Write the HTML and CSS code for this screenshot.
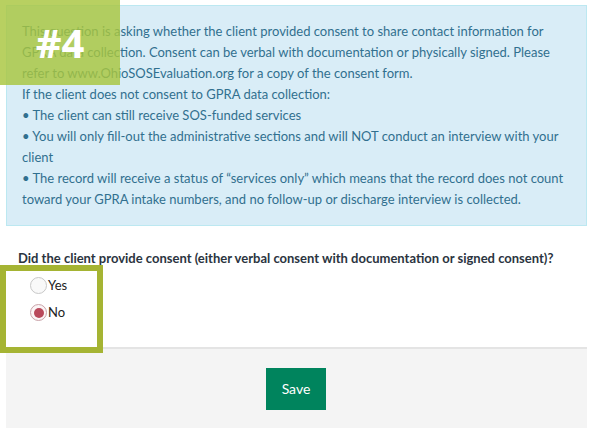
FILE: index.html
```html
<!DOCTYPE html>
<html>
<head>
<meta charset="utf-8">
<link rel="stylesheet" href="styles.css">
</head>
<body>
<div class="page">
  <div class="alert">
    <p>This question is asking whether the client provided consent to share contact information for GPRA data collection. Consent can be verbal with documentation or physically signed. Please refer to www.OhioSOSEvaluation.org for a copy of the consent form.</p>
    <p>If the client does not consent to GPRA data collection:</p>
    <p>• The client can still receive SOS-funded services</p>
    <p>• You will only fill-out the administrative sections and will NOT conduct an interview with your client</p>
    <p>• The record will receive a status of “services only” which means that the record does not count toward your GPRA intake numbers, and no follow-up or discharge interview is collected.</p>
  </div>
  <div class="question">
    <div class="label">Did the client provide consent (either verbal consent with documentation or signed consent)?</div>
    <div class="options">
      <label class="opt"><input type="radio" name="consent" class="radio">Yes</label>
      <label class="opt"><input type="radio" name="consent" class="radio" checked>No</label>
    </div>
  </div>
  <div class="footer">
    <button class="save">Save</button>
  </div>
</div>
<div class="step-badge">#4</div>
<div class="highlight"></div>
</body>
</html>
```

FILE: styles.css
```css
html, body {
  margin: 0;
  padding: 0;
  background: #fff;
}
body {
  font-family: "Lato", "Open Sans", sans-serif;
  font-size: 13px;
  line-height: 21px;
  color: #333;
}
.page {
  padding: 5px 6px 0 6px;
  width: 581px;
}
.alert {
  background: #d9edf7;
  border: 1px solid #bce8f1;
  color: #31708f;
  padding: 15px 15px 15px 15px;
}
.alert p {
  margin: 0;
}
.question {
  padding: 0 12px;
}
.label {
  font-weight: bold;
  color: #2b3440;
  margin-top: 22px;
}
.options {
  display: flex;
  flex-direction: column;
  padding: 6px 0 0 12px;
  gap: 6px;
  height: 78px;
  box-sizing: border-box;
}
.opt {
  display: flex;
  align-items: center;
  height: 21px;
  color: #222;
}
.radio {
  appearance: none;
  -webkit-appearance: none;
  margin: 0 1px 0 0;
  width: 17px;
  height: 17px;
  border-radius: 50%;
  border: 1px solid #c8c8c8;
  background: #f9f9f9;
  box-sizing: border-box;
  display: grid;
  place-items: center;
}
.radio:checked {
  border-color: #c9a3a9;
  background: #fbf4f5;
}
.radio:checked::after {
  content: "";
  width: 10px;
  height: 10px;
  border-radius: 50%;
  background: #b9495b;
}
.footer {
  border-top: 2px solid #e4e4e4;
  background: #f4f4f4;
  height: 79px;
  display: flex;
  justify-content: center;
  align-items: center;
}
.save {
  background: #00845d;
  color: #fff;
  border: 0;
  width: 60px;
  height: 42px;
  font-family: "Lato", "Open Sans", sans-serif;
  font-size: 14px;
  padding: 0;
  margin-left: -1px;
}
.step-badge {
  position: absolute;
  left: 0;
  top: 0;
  width: 120px;
  height: 85px;
  background: rgba(168, 198, 62, 0.82);
  color: #fff;
  font-family: "Open Sans", sans-serif;
  font-weight: bold;
  font-size: 40px;
  line-height: 85px;
  text-align: center;
  letter-spacing: 0;
}
.highlight {
  position: absolute;
  left: 0;
  top: 265px;
  width: 103px;
  height: 88px;
  box-sizing: border-box;
  border: 6px solid #a5b433;
}
```
